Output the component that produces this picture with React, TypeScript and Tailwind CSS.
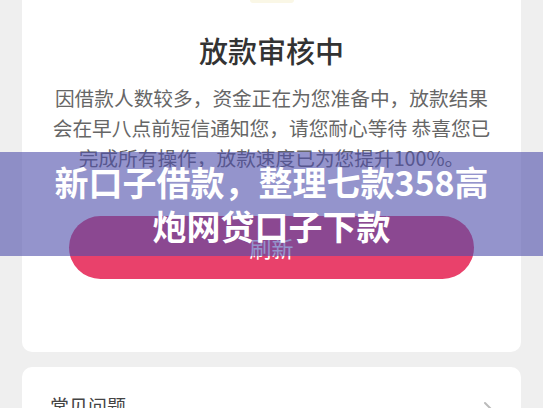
const cjk = { fontFamily: '"Noto Sans CJK SC", "Noto Sans", sans-serif' }

export default function App() {
  return (
    <div className="relative h-[408px] w-[543px] overflow-hidden bg-[#efefef]" style={cjk}>
      <div className="px-[22px]">
        {/* status card */}
        <div className="flex flex-col items-center rounded-b-[10px] bg-white pb-[73px]">
          <div className="h-[3px] w-[44px] rounded-b-full bg-[#faf7e6]" />
          <h1 className="mt-[27px] text-[29px] leading-[40px] font-medium text-[#333333]">放款审核中</h1>
          <p className="mt-[13px] text-center text-[19.7px] leading-[30px] text-[#666666]">
            因借款人数较多，资金正在为您准备中，放款结果
            <br />
            会在早八点前短信通知您，请您耐心等待 恭喜您已
            <br />
            完成所有操作，放款速度已为您提升100%。
          </p>
          <button className="mt-[43px] flex h-[63px] w-[405px] items-center justify-center rounded-full bg-[#e9416b] text-[22px] text-white">
            刷新
          </button>
        </div>

        {/* faq entry */}
        <div className="mt-[15px] flex items-center justify-between rounded-t-[10px] bg-white pt-[25px] pr-[28px] pl-[28px]">
          <span className="text-[19px] leading-[28px] text-[#444444]">常见问题</span>
          <svg width="10" height="16" viewBox="0 0 10 16" className="mt-[6px]">
            <path d="M2 2l6 6-6 6" fill="none" stroke="#bbbbbb" strokeWidth="2" strokeLinecap="round" strokeLinejoin="round" />
          </svg>
        </div>
      </div>

      {/* caption overlay */}
      <div className="absolute top-[152px] left-0 flex h-[104px] w-full items-center justify-center bg-[rgba(77,77,170,0.6)]">
        <p className="text-center text-[34px] leading-[44px] font-bold text-white">
          新口子借款，整理七款358高
          <br />
          炮网贷口子下款
        </p>
      </div>
    </div>
  )
}
